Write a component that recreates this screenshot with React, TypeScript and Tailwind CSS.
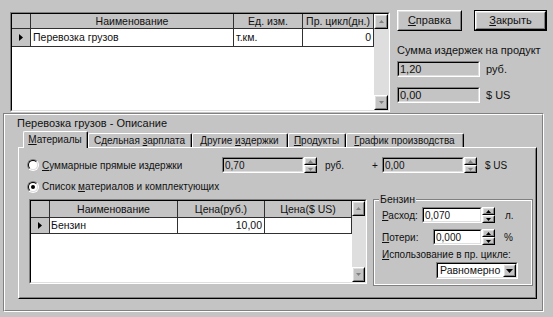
import React from "react";

type P = { className?: string; inner?: string; children?: React.ReactNode };

function Raised({ className = "", inner = "", children }: P) {
  return (
    <div className={`border border-t-white border-l-white border-b-black border-r-black ${className}`}>
      <div className={`h-full w-full border border-t-[#dfdfdf] border-l-[#dfdfdf] border-b-[#808080] border-r-[#808080] ${inner}`}>
        {children}
      </div>
    </div>
  );
}

function Sunken({ className = "", inner = "", children }: P) {
  return (
    <div className={`border border-t-[#808080] border-l-[#808080] border-b-white border-r-white ${className}`}>
      <div className={`h-full w-full overflow-hidden border border-t-black border-l-black border-b-[#dfdfdf] border-r-[#dfdfdf] ${inner}`}>
        {children}
      </div>
    </div>
  );
}

const Up = ({ c = "#000" }: { c?: string }) => (
  <svg width="5" height="3" viewBox="0 0 5 3"><polygon points="0,3 5,3 2.5,0" fill={c} /></svg>
);
const Down = ({ c = "#000" }: { c?: string }) => (
  <svg width="5" height="3" viewBox="0 0 5 3"><polygon points="0,0 5,0 2.5,3" fill={c} /></svg>
);
const BigDown = () => (
  <svg width="7" height="4" viewBox="0 0 7 4"><polygon points="0,0 7,0 3.5,4" fill="#000" /></svg>
);
const RightTri = () => (
  <svg width="4" height="7" viewBox="0 0 4 7"><polygon points="0,0 4,3.5 0,7" fill="#000" /></svg>
);

function Spin({ dis = false }: { dis?: boolean }) {
  const c = dis ? "#808080" : "#000";
  return (
    <div className="flex h-[16px] w-[13px] shrink-0 flex-col">
      <Raised className="h-[8px]" inner="flex items-center justify-center">
        <Up c={c} />
      </Raised>
      <Raised className="h-[8px]" inner="flex items-center justify-center">
        <Down c={c} />
      </Raised>
    </div>
  );
}

function VScroll({ className = "" }: { className?: string }) {
  return (
    <div className={`flex shrink-0 flex-col bg-[#dedede] ${className}`}>
      <Raised className="h-[15px] shrink-0" inner="flex items-center justify-center bg-[#c4c4c4]">
        <Up c="#808080" />
      </Raised>
      <div className="flex-1" />
      <Raised className="h-[15px] shrink-0" inner="flex items-center justify-center bg-[#c4c4c4]">
        <Down c="#808080" />
      </Raised>
    </div>
  );
}

function Radio({ on = false }: { on?: boolean }) {
  return (
    <div className="h-[12px] w-[12px] shrink-0 rounded-full border border-t-[#808080] border-l-[#808080] border-b-white border-r-white">
      <div className="flex h-full w-full items-center justify-center rounded-full border border-t-black border-l-black border-b-[#dfdfdf] border-r-[#dfdfdf] bg-white">
        {on && <div className="h-[4px] w-[4px] rounded-full bg-black" />}
      </div>
    </div>
  );
}

const U = ({ c }: { c: string }) => <span className="underline underline-offset-[1px]">{c}</span>;

function TopGrid() {
  const hd = "h-[15px] shrink-0 bg-[#c4c4c4] border-r border-b border-[#303030] flex items-center justify-center whitespace-nowrap";
  const cl = "h-[18px] shrink-0 border-r border-b border-[#303030] flex items-center whitespace-nowrap";
  return (
    <Sunken className="mt-[2px] h-[100px] w-[380px] shrink-0 text-[10.5px]" inner="flex bg-white">
      <div className="flex flex-1 flex-col">
        <div className="flex">
          <div className={`${hd} w-[19px]`} />
          <div className={`${hd} w-[203px]`}>Наименование</div>
          <div className={`${hd} w-[69px]`}>Ед. изм.</div>
          <div className={`${hd} w-[71px]`}>Пр. цикл(дн.)</div>
        </div>
        <div className="flex">
          <div className={`${cl} w-[19px] justify-center bg-[#c4c4c4]`}>
            <RightTri />
          </div>
          <div className={`${cl} w-[203px] pl-[2px]`}>Перевозка грузов</div>
          <div className={`${cl} w-[69px] pl-[2px]`}>т.км.</div>
          <div className={`${cl} w-[71px] justify-end pr-[2px]`}>0</div>
        </div>
      </div>
      <VScroll className="w-[14px]" />
    </Sunken>
  );
}

function BottomGrid() {
  const hd = "h-[17px] shrink-0 bg-[#c4c4c4] border-r border-b border-[#303030] flex items-center justify-center whitespace-nowrap";
  const cl = "h-[16px] shrink-0 border-r border-b border-[#303030] flex items-center whitespace-nowrap";
  return (
    <Sunken className="h-[85px] w-[338px] shrink-0 text-[10.5px]" inner="flex bg-white">
      <div className="flex flex-1 flex-col">
        <div className="flex">
          <div className={`${hd} w-[19px]`} />
          <div className={`${hd} w-[128px]`}>Наименование</div>
          <div className={`${hd} w-[87px]`}>Цена(руб.)</div>
          <div className={`${hd} w-[87px]`}>Цена($ US)</div>
        </div>
        <div className="flex">
          <div className={`${cl} w-[19px] justify-center bg-[#c4c4c4]`}>
            <RightTri />
          </div>
          <div className={`${cl} w-[128px] pl-[1px]`}>Бензин</div>
          <div className={`${cl} w-[87px] justify-end pr-[2px]`}>10,00</div>
          <div className={`${cl} w-[87px]`} />
        </div>
      </div>
      <VScroll className="w-[13px]" />
    </Sunken>
  );
}

function Tab({ w, active = false, children }: { w: string; active?: boolean; children: React.ReactNode }) {
  if (active) {
    return (
      <div className={`${w} h-[17px] shrink-0 rounded-t-[2px] border-t border-l border-r border-t-white border-l-white border-r-black bg-[#c4c4c4]`}>
        <div className="flex h-full w-full items-center justify-center border-r border-r-[#808080] pb-[1px] whitespace-nowrap">
          {children}
        </div>
      </div>
    );
  }
  return (
    <div className={`${w} mb-[1px] h-[14px] shrink-0 rounded-t-[2px] border-t border-l border-r border-t-white border-l-white border-r-black bg-[#c4c4c4]`}>
      <div className="flex h-full w-full items-center justify-center border-r border-r-[#808080] whitespace-nowrap">
        {children}
      </div>
    </div>
  );
}

export default function App() {
  return (
    <div className="h-[317px] w-[553px] select-none overflow-hidden bg-[#c4c4c4] font-['Liberation_Sans',Arial,sans-serif] text-[11px] leading-[13px] text-[#111]">
      {/* top part */}
      <div className="flex h-[113px] pl-[10px] pt-[10px]">
        <TopGrid />
        <div className="ml-[7px] flex flex-col">
          <div className="flex gap-[12px]">
            <Raised className="h-[21px] w-[65px]" inner="flex items-center justify-center">
              <span>
                <U c="С" />правка
              </span>
            </Raised>
            <div className="h-[21px] w-[73px] border border-black">
              <Raised className="h-full w-full" inner="flex items-center justify-center">
                <span>
                  <U c="З" />акрыть
                </span>
              </Raised>
            </div>
          </div>
          <div className="mt-[13px] h-[13px] whitespace-nowrap">Сумма издержек на продукт</div>
          <div className="mt-[4px] flex items-center">
            <Sunken className="h-[16px] w-[83px]" inner="flex items-center bg-[#c4c4c4] pl-[1px]">
              1,20
            </Sunken>
            <span className="ml-[6px]">руб.</span>
          </div>
          <div className="mt-[10px] flex items-center">
            <Sunken className="h-[16px] w-[83px]" inner="flex items-center bg-[#c4c4c4] pl-[1px]">
              0,00
            </Sunken>
            <span className="ml-[6px]">$ US</span>
          </div>
        </div>
      </div>

      {/* bottom part */}
      <div className="ml-[3px] h-[199px] w-[541px] border border-t-[#808080] border-l-[#808080] border-b-white border-r-white">
        <div className="h-full w-full border border-t-white border-l-white border-b-[#808080] border-r-[#808080] pt-[2px]">
          <div className="h-[13px] whitespace-nowrap pl-[12px]">Перевозка грузов - Описание</div>
          <div className="ml-[13px] mt-[1px] w-[519px] text-[10px]">
            <div className="relative z-10 flex h-[17px] items-end pl-[5px]">
              <Tab w="w-[65px]" active>
                <span>
                  <U c="М" />атериалы
                </span>
              </Tab>
              <Tab w="w-[104px]">
                <span>
                  Сдельная <U c="з" />арплата
                </span>
              </Tab>
              <Tab w="w-[96px]">
                <span>
                  Другие <U c="и" />здержки
                </span>
              </Tab>
              <Tab w="w-[58px]">
                <span>
                  <U c="П" />родукты
                </span>
              </Tab>
              <Tab w="w-[118px]">
                <span>
                  <U c="Г" />рафик производства
                </span>
              </Tab>
            </div>
            <div className="-mt-[1px] h-[152px] border border-t-white border-l-white border-b-black border-r-black">
              <div className="h-full w-full border border-t-[#c4c4c4] border-l-[#c4c4c4] border-b-[#808080] border-r-[#808080]">
                {/* row 1 */}
                <div className="mt-[8px] flex h-[16px] items-center pl-[7px]">
                  <Radio />
                  <div className="ml-[3px] w-[180px] whitespace-nowrap">
                    <U c="С" />уммарные прямые издержки
                  </div>
                  <Sunken className="h-[16px] w-[82px] shrink-0" inner="flex items-center bg-[#c4c4c4] pl-[1px]">
                    0,70
                  </Sunken>
                  <Spin dis />
                  <div className="ml-[8px] w-[47px] shrink-0">руб.</div>
                  <div className="w-[10px] shrink-0">+</div>
                  <Sunken className="h-[16px] w-[82px] shrink-0" inner="flex items-center bg-[#c4c4c4] pl-[1px]">
                    0,00
                  </Sunken>
                  <Spin dis />
                  <div className="ml-[8px] whitespace-nowrap">$ US</div>
                </div>
                {/* row 2 */}
                <div className="mt-[7px] flex h-[13px] items-center pl-[7px]">
                  <Radio on />
                  <div className="ml-[3px] whitespace-nowrap">
                    Список <U c="м" />атериалов и комплектующих
                  </div>
                </div>
                {/* row 3 */}
                <div className="mt-[6px] flex items-start pl-[9px]">
                  <BottomGrid />
                  <div className="relative ml-[6px] h-[87px] w-[160px] shrink-0 border border-[#808080]">
                    <div className="h-full w-full border border-white">
                      <div className="absolute left-[5px] top-[-7px] bg-[#c4c4c4] px-[1px] text-[10.5px] leading-[13px]">Бензин</div>
                      <div className="mt-[6px] flex h-[16px] items-center pl-[7px]">
                        <div className="w-[40px] shrink-0">
                          <U c="Р" />асход:
                        </div>
                        <Sunken className="h-[16px] w-[60px] shrink-0" inner="flex items-center bg-white pl-[1px]">
                          0,070
                        </Sunken>
                        <Spin />
                        <div className="ml-[10px]">л.</div>
                      </div>
                      <div className="mt-[6px] flex h-[16px] items-center pl-[7px]">
                        <div className="w-[51px] shrink-0">
                          <U c="П" />отери:
                        </div>
                        <Sunken className="h-[16px] w-[49px] shrink-0" inner="flex items-center bg-white pl-[1px]">
                          0,000
                        </Sunken>
                        <Spin />
                        <div className="ml-[9px]">%</div>
                      </div>
                      <div className="mt-[3px] h-[13px] whitespace-nowrap pl-[7px]">
                        <U c="И" />спользование в пр. цикле:
                      </div>
                      <div className="ml-[61px] mt-[1px]">
                        <Sunken className="h-[17px] w-[82px]" inner="flex items-center bg-white">
                          <div className="flex-1 whitespace-nowrap pl-[2px] text-[10.5px] leading-[13px]">Равномерно</div>
                          <Raised className="h-full w-[13px] shrink-0" inner="flex items-center justify-center bg-[#c4c4c4]">
                            <BigDown />
                          </Raised>
                        </Sunken>
                      </div>
                    </div>
                  </div>
                </div>
              </div>
            </div>
          </div>
        </div>
      </div>
    </div>
  );
}
